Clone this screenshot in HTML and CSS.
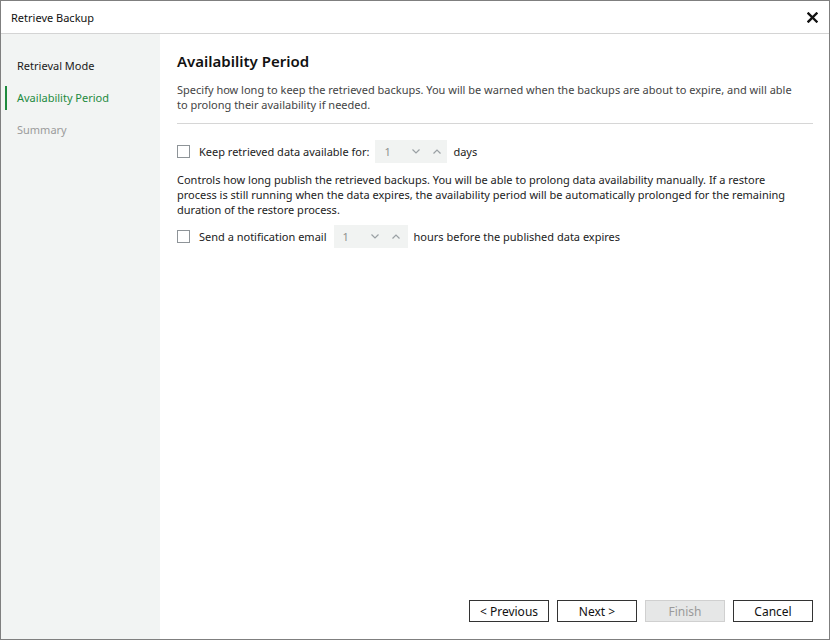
FILE: index.html
```html
<!DOCTYPE html>
<html lang="en">
<head>
  <meta charset="UTF-8" />
  <title>Retrieve Backup</title>
  <link rel="stylesheet" href="styles.css">
</head>
<body>
  <div class="window">
    <div class="titlebar">
      <span>Retrieve Backup</span>
      <svg class="close" width="11" height="11" viewBox="0 0 11 11">
        <path d="M1.5 1.5 L9.5 9.5 M9.5 1.5 L1.5 9.5" stroke="#111" stroke-width="2.4" stroke-linecap="square"/>
      </svg>
    </div>

    <div class="main">
      <div class="sidebar">
        <div class="step">Retrieval Mode</div>
        <div class="step active">Availability Period</div>
        <div class="step muted">Summary</div>
      </div>

      <div class="content">
        <h1>Availability Period</h1>
        <p class="desc">Specify how long to keep the retrieved backups. You will be warned when the backups are about to expire, and will able to prolong their availability if needed.</p>
        <hr>

        <div class="option">
          <span class="checkbox"></span>
          <span class="label">Keep retrieved data available for:</span>
          <div class="spinner">
            <span class="val">1</span>
            <svg width="8" height="5" viewBox="0 0 8 5"><polyline points="0.5,0.5 4,4 7.5,0.5" fill="none" stroke="#9aa0a4" stroke-width="1.2"/></svg>
            <svg width="8" height="5" viewBox="0 0 8 5"><polyline points="0.5,4.5 4,1 7.5,4.5" fill="none" stroke="#9aa0a4" stroke-width="1.2"/></svg>
          </div>
          <span class="label">days</span>
        </div>

        <p class="note">Controls how long publish the retrieved backups. You will be able to prolong data availability manually. If a restore process is still running when the data expires, the availability period will be automatically prolonged for the remaining duration of the restore process.</p>

        <div class="option">
          <span class="checkbox"></span>
          <span class="label">Send a notification email</span>
          <div class="spinner wide">
            <span class="val">1</span>
            <svg width="8" height="5" viewBox="0 0 8 5"><polyline points="0.5,0.5 4,4 7.5,0.5" fill="none" stroke="#9aa0a4" stroke-width="1.2"/></svg>
            <svg width="8" height="5" viewBox="0 0 8 5"><polyline points="0.5,4.5 4,1 7.5,4.5" fill="none" stroke="#9aa0a4" stroke-width="1.2"/></svg>
          </div>
          <span class="label">hours before the published data expires</span>
        </div>

        <div class="footer">
          <button>&lt; Previous</button>
          <button>Next &gt;</button>
          <button disabled>Finish</button>
          <button>Cancel</button>
        </div>
      </div>
    </div>
  </div>
</body>
</html>
```

FILE: styles.css
```css
html, body {
  margin: 0;
  padding: 0;
}
body {
  font-family: 'Noto Sans', 'Open Sans', sans-serif;
  font-size: 11px;
  color: #222;
  background: #fff;
}
.window {
  width: 830px;
  height: 640px;
  box-sizing: border-box;
  border: 1px solid #7f7f7f;
  display: flex;
  flex-direction: column;
}
.titlebar {
  height: 32px;
  border-bottom: 1px solid #d4d4d4;
  display: flex;
  align-items: center;
  justify-content: space-between;
  padding: 0 11px 0 10px;
  color: #111;
}
.main {
  flex: 1;
  display: flex;
}
.sidebar {
  width: 159px;
  background: #f2f4f3;
  padding-top: 20px;
}
.step {
  position: relative;
  height: 24px;
  line-height: 24px;
  margin-bottom: 8px;
  padding-left: 16px;
  color: #1a1a1a;
}
.step.active {
  color: #1e8b3e;
}
.step.active::before {
  content: "";
  position: absolute;
  left: 4px;
  top: 0;
  width: 2px;
  height: 24px;
  background: #1e8b3e;
}
.step.muted {
  color: #9b9b9b;
}
.content {
  flex: 1;
  display: flex;
  flex-direction: column;
  padding: 17px 16px 17px 17px;
}
h1 {
  margin: 0;
  font-size: 15px;
  font-weight: 600;
  line-height: 20px;
  color: #111;
}
.desc {
  margin: 11px 0 0;
  line-height: 15px;
  color: #444;
  max-width: 620px;
}
hr {
  border: 0;
  border-top: 1px solid #d6d6d6;
  margin: 11px 0 0 0;
}
.option {
  display: flex;
  align-items: center;
  margin-top: 16px;
  height: 23px;
}
.note + .option {
  margin-top: 8px;
}
.checkbox {
  width: 11px;
  height: 11px;
  border: 1px solid #8e9498;
  background: #fff;
  margin-right: 9px;
}
.label {
  color: #222;
}
.spinner {
  display: flex;
  align-items: center;
  width: 72px;
  height: 23px;
  background: #f1f3f2;
  margin: 0 6px 0 6px;
  box-sizing: border-box;
  padding-left: 9px;
  color: #8f8f8f;
}
.spinner.wide {
  width: 74px;
  margin-left: 7px;
}
.spinner .val {
  width: 28px;
}
.spinner svg {
  margin-right: 13px;
}
.spinner svg:last-child {
  margin-right: 0;
}
.note {
  margin: 9px 0 0;
  line-height: 15px;
  color: #222;
  max-width: 620px;
}
.footer {
  margin-top: auto;
  display: flex;
  justify-content: flex-end;
  gap: 8px;
}
button {
  width: 80px;
  height: 22px;
  font-family: inherit;
  font-size: 12px;
  background: #fff;
  border: 1px solid #333;
  color: #111;
  padding: 0;
}
button:disabled {
  background: #e6e7e7;
  border-color: #d0d0d0;
  color: #9a9a9a;
}
```
